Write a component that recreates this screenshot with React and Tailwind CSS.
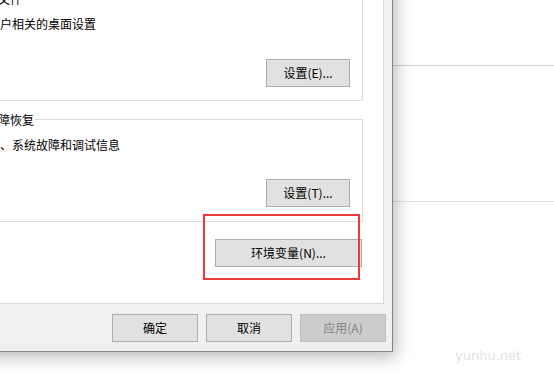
export default function App() {
  const btn =
    "flex items-center justify-center h-[28px] border border-[#adadad] bg-[#e1e1e1] text-[12px] leading-[16px] text-black";
  return (
    <div className="relative w-[554px] h-[378px] overflow-hidden bg-white font-['Noto_Sans_CJK_SC',sans-serif] text-[12px] leading-[16px] text-black">
      {/* background window */}
      <div className="flex flex-col">
        <div className="h-[66px] border-b border-[#d2d2d2]" />
        <div className="h-[136px] border-b border-[#e3e3e3]" />
      </div>
      <div className="absolute left-[455px] top-[347px] font-['DejaVu_Sans',sans-serif] text-[13px] leading-[18px] text-[#e2e2e2]">
        yunhu.net
      </div>

      {/* dialog window */}
      <div className="absolute left-[-100px] top-[-80px] w-[493px] flex flex-col border border-[#858585] bg-[#f0f0f0] pt-[39px] pl-[8px] pr-[6px] pb-[9px] shadow-[3px_5px_16px_rgba(0,0,0,0.28)]">
        <div className="mr-[2px] flex flex-col border border-[#d9d9d9] bg-white pt-[37px] pl-[35px] pr-[20px] pb-[36px]">
          {/* group 1 */}
          <div className="relative h-[103px] flex flex-col border border-[#dcdcdc]">
            <span className="absolute left-[3px] top-[-8px] bg-white px-[1px]">用户配置文件</span>
            <div className="pt-[17px] pl-[6px]">与登录帐户相关的桌面设置</div>
            <button className={`${btn} mt-auto self-end mr-[12px] mb-[13px] w-[84px]`}>设置(E)...</button>
          </div>
          {/* group 2 */}
          <div className="relative mt-[18px] h-[103px] flex flex-col border border-[#dcdcdc]">
            <span className="absolute left-[3px] top-[-8px] bg-white px-[1px]">启动和故障恢复</span>
            <div className="pt-[17px] pl-[6px]">系统启动、系统故障和调试信息</div>
            <button className={`${btn} mt-auto self-end mr-[12px] mb-[14px] w-[84px]`}>设置(T)...</button>
          </div>
          <button className={`${btn} mt-[17px] self-end mr-[1px] w-[147px]`}>环境变量(N)...</button>
        </div>
        <div className="flex justify-end gap-[8px] pt-[10px]">
          <button className={`${btn} w-[86px]`}>确定</button>
          <button className={`${btn} w-[86px]`}>取消</button>
          <button className="flex items-center justify-center h-[28px] w-[86px] border border-[#bfbfbf] bg-[#cccccc] text-[12px] leading-[16px] text-[#838383]">
            应用(A)
          </button>
        </div>
      </div>

      {/* red highlight */}
      <div className="absolute left-[203px] top-[214px] w-[157px] h-[66px] border-2 border-[#ee3a3a]" />
    </div>
  );
}
